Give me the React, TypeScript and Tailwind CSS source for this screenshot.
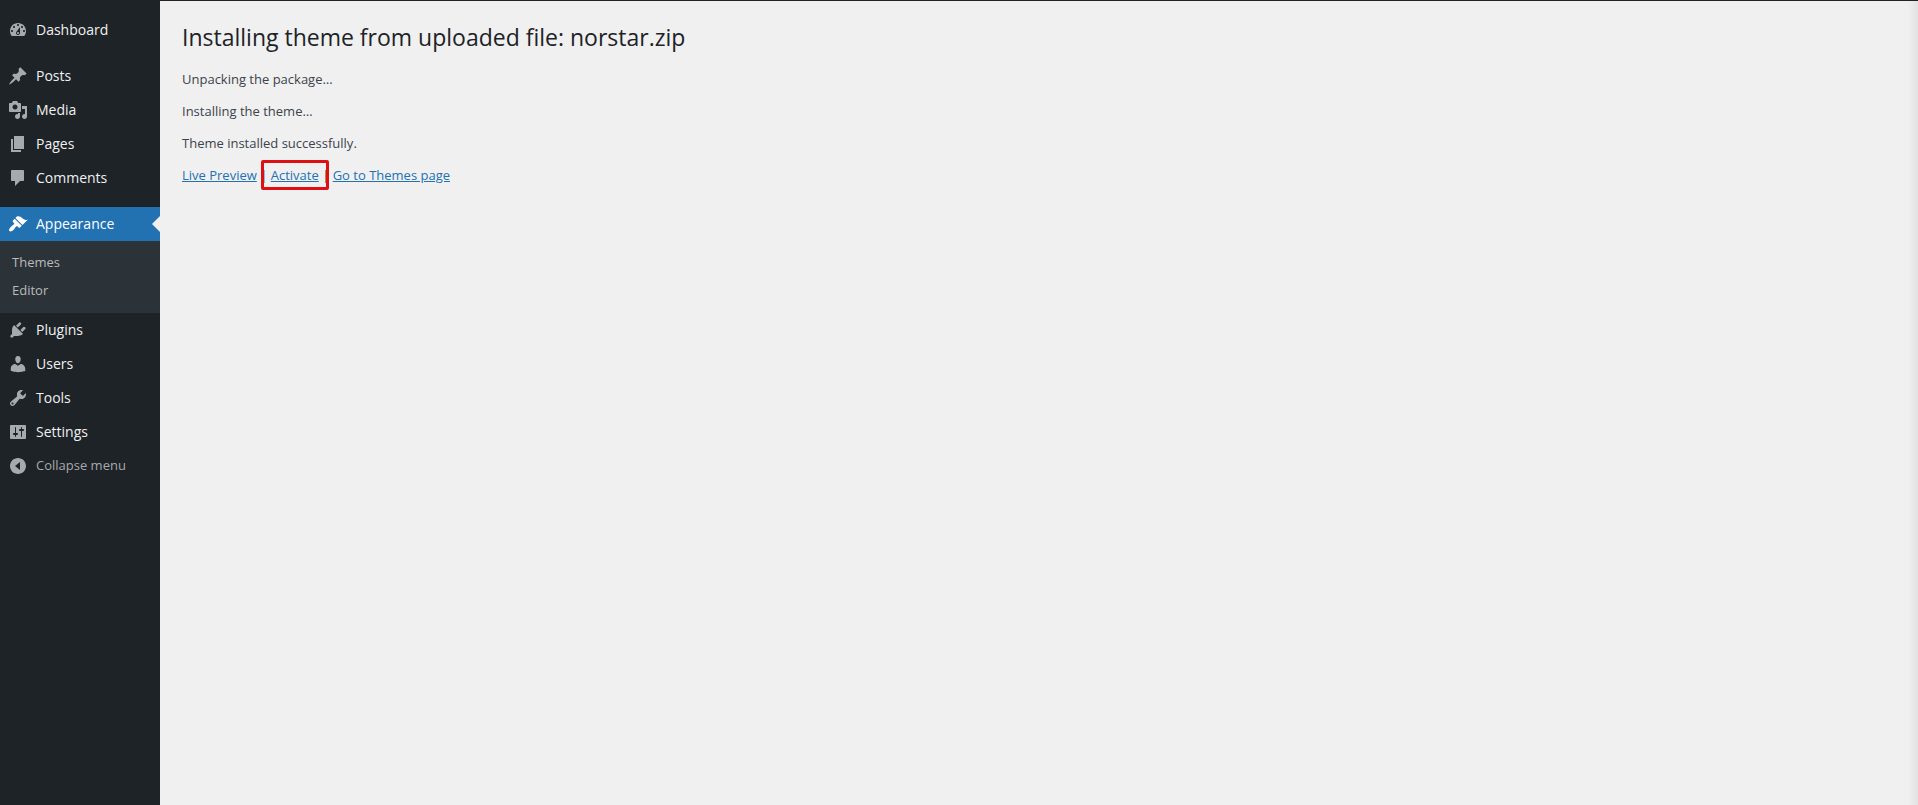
import type { ReactNode } from "react";
import clsx from "clsx";

type MenuItem = {
  label: string;
  icon: string;
  current?: boolean;
  separated?: boolean;
  children?: string[];
};

const menu: MenuItem[] = [
  {
    label: "Dashboard",
    icon: "M3.76 16h12.48c1.1-1.37 1.76-3.11 1.76-5 0-4.42-3.58-8-8-8s-8 3.58-8 8c0 1.89.66 3.63 1.76 5zM10 4c.55 0 1 .45 1 1s-.45 1-1 1-1-.45-1-1 .45-1 1-1zM6 6c.55 0 1 .45 1 1s-.45 1-1 1-1-.45-1-1 .45-1 1-1zm8 0c.55 0 1 .45 1 1s-.45 1-1 1-1-.45-1-1 .45-1 1-1zm-5.37 5.55L12 7v6c0 1.1-.9 2-2 2s-2-.9-2-2c0-.57.24-1.08.63-1.45zM4 10c.55 0 1 .45 1 1s-.45 1-1 1-1-.45-1-1 .45-1 1-1zm12 0c.55 0 1 .45 1 1s-.45 1-1 1-1-.45-1-1 .45-1 1-1zm-5 3c0-.55-.45-1-1-1s-1 .45-1 1 .45 1 1 1 1-.45 1-1z",
  },
  {
    label: "Posts",
    separated: true,
    icon: "M10.44 3.02l1.82-1.82 6.36 6.35-1.83 1.82c-1.05-.68-2.48-.57-3.41.36l-.75.75c-.92.93-1.04 2.35-.35 3.41l-1.83 1.82-2.41-2.41-2.8 2.79c-.42.42-3.38 2.71-3.8 2.29s1.86-3.39 2.28-3.81l2.79-2.79L4.1 9.36l1.83-1.82c1.05.69 2.48.57 3.4-.36l.75-.75c.93-.92 1.05-2.35.36-3.41z",
  },
  {
    label: "Media",
    icon: "M13 11V4c0-.55-.45-1-1-1h-1.67L9 1H5L3.67 3H2c-.55 0-1 .45-1 1v7c0 .55.45 1 1 1h10c.55 0 1-.45 1-1zM7 4.5c1.38 0 2.5 1.12 2.5 2.5S8.38 9.5 7 9.5 4.5 8.38 4.5 7 5.62 4.5 7 4.5zM14 6h5v10.5c0 1.38-1.12 2.5-2.5 2.5S14 17.88 14 16.5s1.12-2.5 2.5-2.5c.17 0 .34.02.5.05V9h-3V6zm-4 8.05V13h2v3.5c0 1.38-1.12 2.5-2.5 2.5S7 17.88 7 16.5 8.12 14 9.5 14c.17 0 .34.02.5.05z",
  },
  {
    label: "Pages",
    icon: "M6 15V2h10v13H6zm-1 1h8v2H3V5h2v11z",
  },
  {
    label: "Comments",
    icon: "M4 2h11c.55 0 1 .45 1 1v9c0 .55-.45 1-1 1h-3l-5 5v-5H4c-.55 0-1-.45-1-1V3c0-.55.45-1 1-1z",
  },
  {
    label: "Appearance",
    separated: true,
    current: true,
    icon: "M14.48 11.06L7.41 3.99l1.5-1.5c.5-.56 2.3-.47 3.51.32 1.21.8 1.43 1.28 2.91 2.1 1.18.64 2.45 1.26 4.45.85zm-.71.71L6.7 4.7 4.93 6.47c-.39.39-.39 1.02 0 1.41l1.06 1.06c.39.39.39 1.03 0 1.42-.6.6-1.43 1.11-2.21 1.69-.35.26-.7.53-1.01.84C1.43 14.23.4 16.08 1.4 17.07c.99 1 2.84-.03 4.18-1.36.31-.31.58-.66.85-1.02.57-.78 1.08-1.61 1.69-2.21.39-.39 1.02-.39 1.41 0l1.06 1.06c.39.39 1.02.39 1.41 0z",
    children: ["Themes", "Editor"],
  },
  {
    label: "Plugins",
    icon: "M13.11 4.36L9.87 7.6 8 5.73l3.24-3.24c.35-.34 1.05-.2 1.56.32.52.51.66 1.21.31 1.55zm-8 1.77l.91-1.12 9.01 9.01-1.19.84c-.71.71-2.63 1.16-3.82 1.16H6.14L4.9 17.26c-.59.59-1.54.59-2.12 0-.59-.58-.59-1.53 0-2.12l1.24-1.24v-3.88c0-1.13.4-3.19 1.09-3.89zm7.26 3.97l3.24-3.24c.34-.35 1.04-.21 1.55.31.52.51.66 1.21.31 1.55l-3.24 3.25z",
  },
  {
    label: "Users",
    icon: "M10 9.25c-2.27 0-2.73-3.44-2.73-3.44C7 4.02 7.82 2 9.97 2c2.16 0 2.98 2.02 2.71 3.81 0 0-.41 3.44-2.68 3.44zm0 2.57L12.72 10c2.39 0 4.52 2.33 4.52 4.53v2.49s-3.65 1.13-7.24 1.13c-3.65 0-7.24-1.13-7.24-1.13v-2.49c0-2.25 1.94-4.48 4.47-4.48z",
  },
  {
    label: "Tools",
    icon: "M16.68 9.77c-1.34 1.34-3.3 1.67-4.95.99l-5.41 6.52c-.99.99-2.59.99-3.58 0s-.99-2.59 0-3.57l6.52-5.42c-.68-1.65-.35-3.61.99-4.95 1.28-1.28 3.12-1.62 4.72-1.06l-2.89 2.89 2.82 2.82 2.86-2.87c.53 1.58.18 3.39-1.08 4.65zM3.81 16.21c.4.39 1.04.39 1.43 0 .4-.4.4-1.04 0-1.43-.39-.4-1.03-.4-1.43 0-.39.39-.39 1.03 0 1.43z",
  },
  {
    label: "Settings",
    icon: "M18 16V4c0-.55-.45-1-1-1H3c-.55 0-1 .45-1 1v12c0 .55.45 1 1 1h14c.55 0 1-.45 1-1zM8 11h1c.55 0 1 .45 1 1s-.45 1-1 1H8v1.5c0 .28-.22.5-.5.5s-.5-.22-.5-.5V13H6c-.55 0-1-.45-1-1s.45-1 1-1h1V5.5c0-.28.22-.5.5-.5s.5.22.5.5V11zm5-2h-1c-.55 0-1-.45-1-1s.45-1 1-1h1V5.5c0-.28.22-.5.5-.5s.5.22.5.5V7h1c.55 0 1 .45 1 1s-.45 1-1 1h-1v5.5c0 .28-.22.5-.5.5s-.5-.22-.5-.5V9z",
  },
];

const collapseIcon =
  "M10 2c4.42 0 8 3.58 8 8s-3.58 8-8 8-8-3.58-8-8 3.58-8 8-8zm2 12V6l-5 4z";

const messages = [
  "Unpacking the package…",
  "Installing the theme…",
  "Theme installed successfully.",
];

function Icon({ path }: { path: string }) {
  return (
    <svg
      viewBox="0 0 20 20"
      className="size-5 shrink-0"
      fill="currentColor"
      fillRule="evenodd"
      aria-hidden="true"
    >
      <path d={path} />
    </svg>
  );
}

function ActionLink({ children }: { children: ReactNode }) {
  return (
    <a href="#" className="text-[#2271b1] underline hover:text-[#135e96]">
      {children}
    </a>
  );
}

function Sidebar() {
  return (
    <nav aria-label="Main menu" className="w-40 shrink-0 bg-[#1d2327] pt-3">
      <ul>
        {menu.map(({ label, icon, current, separated, children }) => (
          <li key={label} className={clsx(separated && "mt-3")}>
            <a
              href="#"
              aria-current={current ? "page" : undefined}
              className={clsx(
                "relative flex h-[34px] items-center gap-2 pl-2 text-sm",
                current ? "bg-[#2271b1] text-white" : "text-[#f0f0f1]",
              )}
            >
              <span className={clsx("flex", !current && "text-[#a7aaad]")}>
                <Icon path={icon} />
              </span>
              {label}
              {current && (
                <span className="absolute top-1/2 right-0 -translate-y-1/2 border-8 border-transparent border-r-[#f0f0f1]" />
              )}
            </a>
            {children && (
              <ul className="bg-[#2c3338] py-2">
                {children.map((child) => (
                  <li key={child}>
                    <a
                      href="#"
                      className="flex h-7 items-center pl-3 text-[13px] text-[#b9babc]"
                    >
                      {child}
                    </a>
                  </li>
                ))}
              </ul>
            )}
          </li>
        ))}
      </ul>
      <button
        type="button"
        className="flex h-[34px] w-full items-center gap-2 pl-2 text-[13px] text-[#a7aaad]"
      >
        <Icon path={collapseIcon} />
        Collapse menu
      </button>
    </nav>
  );
}

export default function App() {
  return (
    <div className="flex min-h-screen border-t border-[#1d2327] bg-[#f0f0f1] font-['Segoe_UI','Open_Sans',sans-serif]">
      <Sidebar />
      <main className="min-w-0 flex-1 px-[22px] pt-5 text-[13px] leading-5 text-[#3c434a]">
        <h1 className="mb-4 text-[23px] leading-8 text-[#1d2327]">
          Installing theme from uploaded file: norstar.zip
        </h1>
        <div className="flex flex-col gap-3">
          {messages.map((message) => (
            <p key={message}>{message}</p>
          ))}
          <p>
            <ActionLink>Live Preview</ActionLink>
            {" | "}
            <span className="relative">
              <ActionLink>Activate</ActionLink>
              <span className="pointer-events-none absolute -inset-x-2.5 -inset-y-1.5 rounded-xs border-3 border-[#dd1014]" />
            </span>
            {" | "}
            <ActionLink>Go to Themes page</ActionLink>
          </p>
        </div>
      </main>
      <div className="w-2.5 bg-linear-to-r from-[#f0f0f1] to-[#e2e2e3]" />
    </div>
  );
}
